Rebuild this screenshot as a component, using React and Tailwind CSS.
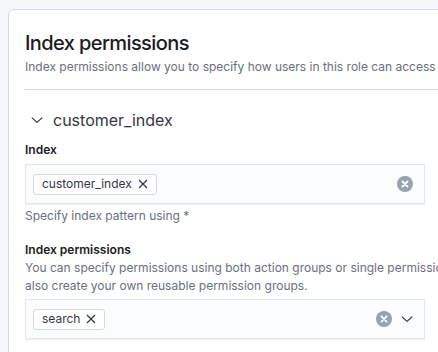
import React from "react";

// small clear button (grey disc with white cross)
function ClearIcon() {
  return (
    <svg width="16" height="16" viewBox="0 0 16 16" className="shrink-0">
      <circle cx="8" cy="8" r="8" fill="#98a2b3" />
      <path d="M5.5 5.5 L10.5 10.5 M10.5 5.5 L5.5 10.5" stroke="#fff" strokeWidth="1.8" strokeLinecap="round" />
    </svg>
  );
}

function Chevron({ className = "" }) {
  return (
    <svg width="12" height="12" viewBox="0 0 12 12" className={className}>
      <path d="M0.8 3.6 L6 8.4 L11.2 3.6" fill="none" stroke="#343741" strokeWidth="1.2" strokeLinejoin="round" />
    </svg>
  );
}

function Pill({ label }) {
  return (
    <span className="inline-flex items-center h-[21px] pl-[8px] pr-[8px] gap-[6px] bg-white border border-[#d3dae6] rounded-[3px] text-[12px] text-[#343741]">
      {label}
      <svg width="10" height="10" viewBox="0 0 10 10">
        <path d="M1 1 L9 9 M9 1 L1 9" stroke="#343741" strokeWidth="1.2" />
      </svg>
    </span>
  );
}

function ComboBox({ value, withArrow }) {
  return (
    <div className="w-[400px] h-[40px] flex items-center pl-[7px] pr-[11px] bg-[#fbfcfd] border border-[#e3e7ef] shadow-[0_1px_1px_rgba(0,0,0,0.06)]">
      <Pill label={value} />
      <div className="flex-1" />
      <ClearIcon />
      {withArrow && <Chevron className="ml-[9px]" />}
    </div>
  );
}

export default function App() {
  return (
    <div
      className="w-[438px] h-[352px] overflow-hidden bg-[#f5f7fa] pt-[9px] pl-[8px] text-[#1a1c21]"
      style={{ fontFamily: "Inter, 'Liberation Sans', sans-serif" }}
    >
      <div className="w-[540px] h-[400px] bg-white border border-[#d3dae6] rounded-[6px] pl-[16px] pt-[19px]">
        <h2 className="text-[20px] leading-[28px] font-medium tracking-[-0.03em]">Index permissions</h2>
        <p className="mt-[1px] text-[12px] leading-[18px] text-[#69707d] whitespace-nowrap">
          Index permissions allow you to specify how users in this role can access the specific indices.
        </p>
        <div className="mt-[13px] h-px bg-[#d3dae6]" />

        {/* accordion header */}
        <div className="mt-[18px] flex items-center h-[24px]">
          <Chevron className="ml-[6px] mr-[10px]" />
          <span className="text-[16px] leading-[24px] text-[#343741]">customer_index</span>
        </div>

        <div className="mt-[9px] text-[12px] leading-[18px] font-semibold">Index</div>
        <div className="mt-[5px]">
          <ComboBox value="customer_index" />
        </div>
        <div className="mt-[3px] text-[12px] leading-[18px] text-[#69707d]">Specify index pattern using *</div>

        <div className="mt-[16px] text-[12px] leading-[18px] font-semibold">Index permissions</div>
        <p className="text-[12px] leading-[18px] text-[#69707d] whitespace-nowrap">
          You can specify permissions using both action groups or single permissions. You can
          <br />
          also create your own reusable permission groups.
        </p>
        <div className="mt-[4px]">
          <ComboBox value="search" withArrow />
        </div>
      </div>
    </div>
  );
}
